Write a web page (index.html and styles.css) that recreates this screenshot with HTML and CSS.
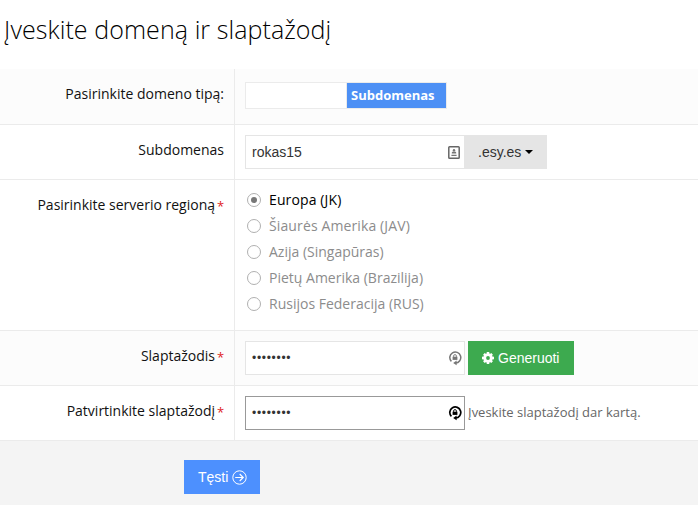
FILE: index.html
```html
<!DOCTYPE html>
<html lang="lt">
<head>
<meta charset="utf-8">
<title>Įveskite domeną ir slaptažodį</title>
<link rel="stylesheet" href="styles.css">
</head>
<body>
<h1 class="title">Įveskite domeną ir slaptažodį</h1>
<form class="form">
  <div class="row row-first shaded">
    <div class="label"><span>Pasirinkite domeno tipą:</span></div>
    <div class="field">
      <div class="switch"><span class="switch-off"></span><span class="switch-on">Subdomenas</span></div>
    </div>
  </div>
  <div class="row">
    <div class="label"><span>Subdomenas</span></div>
    <div class="field">
      <div class="input input-joined"><span>rokas15</span>
        <svg class="icon-card" viewBox="0 0 12 13" width="12" height="13"><rect x=".8" y=".8" width="10.4" height="11.4" rx=".8" fill="#fff" stroke="#666" stroke-width="1.5"/><circle cx="6" cy="4.2" r="1.2" fill="#777"/><path d="M3.8 7.4V6.6q0-1.2 2.2-1.2t2.2 1.2v.8zM3.4 8.7h5.2v1.2H3.4z" fill="#777"/></svg>
      </div>
      <div class="suffix"><span>.esy.es</span><span class="caret"></span></div>
    </div>
  </div>
  <div class="row row-regions">
    <div class="label"><span>Pasirinkite serverio regioną</span><b class="req">*</b></div>
    <div class="field regions">
      <div class="option selected"><i class="radio"></i><span class="wide">Europa (JK)</span></div>
      <div class="option"><i class="radio"></i><span class="wide">Šiaurės Amerika (JAV)</span></div>
      <div class="option"><i class="radio"></i><span>Azija (Singapūras)</span></div>
      <div class="option"><i class="radio"></i><span>Pietų Amerika (Brazilija)</span></div>
      <div class="option"><i class="radio"></i><span>Rusijos Federacija (RUS)</span></div>
    </div>
  </div>
  <div class="row shaded">
    <div class="label"><span>Slaptažodis</span><b class="req">*</b></div>
    <div class="field">
      <div class="input"><span class="dots">••••••••</span>
        <svg class="icon-lock" viewBox="0 0 14 16" width="14" height="16"><path d="M3.4 11.4A5.500 5.500 0 1 1 7.500 13" fill="none" stroke="currentColor" stroke-width="1.500"/><path d="M8.600 10.500v4.800L5.200 12.900z" fill="currentColor"/><rect x="4.600" y="6.700" width="4.800" height="3.200" fill="currentColor"/><path d="M5.600 6.900V6a1.400 1.400 0 0 1 2.800 0v.9" fill="none" stroke="currentColor" stroke-width=".9"/></svg>
      </div>
      <div class="btn btn-green">
        <svg class="icon-gear" viewBox="0 0 12 12" width="12" height="12"><g fill="#fff"><circle cx="6" cy="6" r="4.500"/><path d="M4.800 0h2.400l.5 3H4.300zM4.800 12h2.400l.5-3H4.300zM0 4.800v2.400l3 .5V4.300zM12 4.800v2.400l-3 .5V4.300zM1.100 2.700l1.600-1.600 2.400 1.700-2.300 2.300zM10.900 2.700L9.300 1.100 6.900 2.800l2.300 2.300zM1.100 9.300l1.600 1.600 2.400-1.700-2.300-2.300zM10.900 9.300l-1.600 1.600-2.400-1.700 2.300-2.300z"/></g><circle cx="6" cy="6" r="1.900" fill="#3daa4f"/></svg>
        <span>Generuoti</span>
      </div>
    </div>
  </div>
  <div class="row">
    <div class="label"><span>Patvirtinkite slaptažodį</span><b class="req">*</b></div>
    <div class="field">
      <div class="input input-active"><span class="dots">••••••••</span>
        <svg class="icon-lock" viewBox="0 0 14 16" width="14" height="16"><path d="M3.4 11.4A5.500 5.500 0 1 1 7.500 13" fill="none" stroke="currentColor" stroke-width="1.700"/><path d="M8.600 10.500v4.800L5.200 12.900z" fill="currentColor"/><rect x="4.600" y="6.700" width="4.800" height="3.200" fill="currentColor"/><path d="M5.600 6.900V6a1.400 1.400 0 0 1 2.800 0v.9" fill="none" stroke="currentColor" stroke-width=".9"/></svg>
      </div>
      <span class="hint">Įveskite slaptažodį dar kartą.</span>
    </div>
  </div>
  <div class="actions">
    <div class="btn btn-blue"><span>Tęsti</span>
      <svg class="icon-next" viewBox="0 0 15 15" width="15" height="15" fill="none" stroke="#fff"><circle cx="7.500" cy="7.500" r="6.700"/><path d="M3.200 7.500h8M7.700 4l3.500 3.500L7.700 11" stroke-width="1.200"/></svg>
    </div>
  </div>
</form>
</body>
</html>
```

FILE: styles.css
```css
* { box-sizing: border-box; }
body {
  margin: 0;
  height: 505px;
  overflow: hidden;
  background: #fff;
  color: #111;
  font: 14px/20px "Open Sans", sans-serif;
}
.title {
  height: 69px;
  margin: 0;
  padding: 11px 0 0 4px;
  font-size: 25px;
  line-height: 36px;
  font-weight: 300;
  letter-spacing: .08px;
  color: #000;
  white-space: nowrap;
}
.row {
  display: flex;
  height: 55px;
  border-bottom: 1px solid #ebebeb;
}
.row-first { height: 56px; }
.row-regions { height: 151px; }
.shaded { background: #fcfcfc; }
.label {
  display: flex;
  justify-content: flex-end;
  width: 234px;
  padding: 15px 10px 0 0;
  white-space: nowrap;
}
.req {
  width: 7px;
  margin-left: 2px;
  color: #e02222;
  font-size: 13px;
  line-height: 22px;
  font-weight: 400;
}
.field {
  display: flex;
  flex: 1;
  align-items: flex-start;
  padding: 10px 0 0 10px;
  border-left: 1px solid #ebebeb;
}
.switch {
  display: flex;
  width: 202px;
  height: 27px;
  margin-top: 3px;
  border: 1px solid #ebebeb;
  background: #fff;
}
.switch-off { width: 101px; border-right: 1px solid #ebebeb; }
.switch-on {
  flex: 1;
  padding-left: 4px;
  background: #4d90f5;
  color: #fff;
  font-size: 13px;
  font-weight: 700;
  line-height: 25px;
}
.input {
  display: flex;
  align-items: center;
  justify-content: space-between;
  width: 220px;
  height: 34px;
  padding: 0 2px 0 6px;
  border: 1px solid #e5e5e5;
  background: #fff;
  color: #333;
  font-family: "Liberation Sans", sans-serif;
}
.input-joined { width: 219px; padding-right: 4px; border-right: 0; }
.input-active { border-color: #999; }
.icon-lock { color: #777; }
.input-active .icon-lock { color: #000; }
.dots { font-size: 12px; letter-spacing: .7px; }
.suffix {
  display: flex;
  align-items: center;
  width: 83px;
  height: 34px;
  padding-left: 14px;
  background: #e5e5e5;
  color: #333;
  font-family: "Liberation Sans", sans-serif;
}
.caret {
  margin-left: 4px;
  border: 4px solid transparent;
  border-top-color: #000;
  border-bottom: 0;
}
.regions {
  flex-direction: column;
  padding: 7px 0 0 12px;
}
.option {
  display: flex;
  align-items: center;
  height: 26px;
  color: #8c8c8c;
}
.wide { letter-spacing: .12px; }
.selected { color: #000; }
.radio {
  display: grid;
  place-items: center;
  width: 14px;
  height: 14px;
  margin-right: 8px;
  border: 1px solid #b0b0b0;
  border-radius: 50%;
}
.selected .radio::after {
  content: "";
  width: 6px;
  height: 6px;
  border-radius: 50%;
  background: #777;
}
.btn {
  display: flex;
  align-items: center;
  height: 34px;
  color: #fff;
  font-family: "Liberation Sans", sans-serif;
  white-space: nowrap;
}
.btn-green {
  width: 106px;
  margin-left: 3px;
  padding-left: 14px;
  gap: 4px;
  background: #3daa4f;
}
.btn-blue {
  width: 76px;
  padding-left: 14px;
  gap: 4px;
  background: #4d90fe;
}
.hint {
  margin: 6px 0 0 3px;
  font-size: 13px;
  color: #666;
  white-space: nowrap;
}
.actions {
  height: 64px;
  padding: 19px 0 0 184px;
  background: #f4f4f4;
}
```
